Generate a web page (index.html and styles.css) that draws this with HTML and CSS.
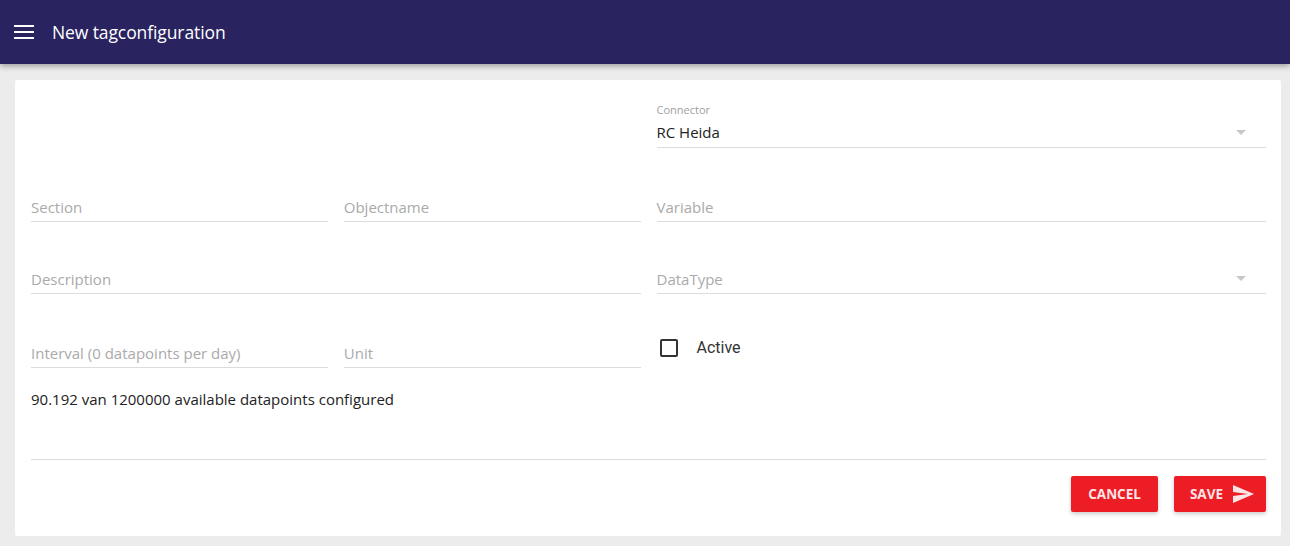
FILE: index.html
```html
<!DOCTYPE html>
<html lang="nl">
<head>
    <meta charset="UTF-8">
    <meta name="viewport" content="width=device-width, initial-scale=1.0">
    <title>New tagconfiguration</title>
    <link rel="stylesheet" href="styles.css">
</head>
<body>
    <header class="toolbar">
        <button class="menu-btn" aria-label="menu">
            <svg width="20" height="14" viewBox="0 0 20 14">
                <rect x="0" y="0" width="20" height="2" fill="#fff"/>
                <rect x="0" y="6" width="20" height="2" fill="#fff"/>
                <rect x="0" y="12" width="20" height="2" fill="#fff"/>
            </svg>
        </button>
        <h1>New tagconfiguration</h1>
    </header>

    <main class="page">
        <div class="card">
            <div class="form-grid">
                <div class="field span-2 empty-cell"></div>
                <div class="field select span-2">
                    <label>Connector</label>
                    <div class="input value">RC Heida<span class="caret"></span></div>
                </div>

                <div class="field">
                    <label></label>
                    <div class="input placeholder">Section</div>
                </div>
                <div class="field">
                    <label></label>
                    <div class="input placeholder">Objectname</div>
                </div>
                <div class="field span-2">
                    <label></label>
                    <div class="input placeholder">Variable</div>
                </div>

                <div class="field span-2 tight">
                    <label></label>
                    <div class="input placeholder">Description</div>
                </div>
                <div class="field select span-2 tight">
                    <label></label>
                    <div class="input placeholder">DataType<span class="caret"></span></div>
                </div>

                <div class="field">
                    <label></label>
                    <div class="input placeholder">Interval (0 datapoints per day)</div>
                </div>
                <div class="field">
                    <label></label>
                    <div class="input placeholder">Unit</div>
                </div>
                <div class="checkbox-cell span-2">
                    <span class="box"></span>
                    <span>Active</span>
                </div>
            </div>

            <p class="info">90.192 van 1200000 available datapoints configured</p>

            <div class="actions">
                <button class="btn">CANCEL</button>
                <button class="btn btn-icon">SAVE
                    <svg width="24" height="24" viewBox="0 0 24 24">
                        <path d="M2.01 21L23 12 2.01 3 2 10l15 2-15 2z" fill="#fde4e6"/>
                    </svg>
                </button>
            </div>
        </div>
    </main>
</body>
</html>
```

FILE: styles.css
```css
* {
    box-sizing: border-box;
}
body {
    margin: 0;
    font-family: "Open Sans", "Noto Sans", Arial, sans-serif;
    background: #ececec;
    color: #222;
    height: 546px;
    overflow: hidden;
}
.toolbar {
    height: 64px;
    background: #29235f;
    display: flex;
    align-items: center;
    padding: 0 14px;
    box-shadow: 0 2px 6px rgba(0,0,0,0.35);
    position: relative;
}
.menu-btn {
    background: none;
    border: none;
    padding: 0;
    margin-right: 18px;
    display: flex;
    cursor: pointer;
}
.toolbar h1 {
    margin: 0;
    color: #fff;
    font-size: 17.5px;
    font-weight: 400;
    letter-spacing: -0.1px;
}
.page {
    padding: 16px 9px 0 15px;
}
.card {
    background: #fff;
    border-radius: 2px;
    padding: 20px 15px 25px 16px;
    height: 456px;
}
.form-grid {
    display: grid;
    grid-template-columns: 1fr 1fr 1fr 1fr;
    column-gap: 16px;
    row-gap: 26px;
}
.span-2 {
    grid-column: span 2;
}
.tight {
    margin-top: -2px;
}
.field label {
    display: block;
    height: 16px;
    font-size: 11px;
    line-height: 16px;
    color: #9e9e9e;
    padding-top: 2px;
}
.input {
    position: relative;
    height: 32px;
    padding-top: 3px;
    line-height: 28px;
    font-size: 15px;
    border-bottom: 1px solid #dcdcdc;
    color: #222;
}
.input.value {
    padding-top: 2px;
}
.input.placeholder {
    color: #aaa;
}
.caret {
    position: absolute;
    right: 20px;
    top: 14px;
    width: 0;
    height: 0;
    border-left: 5px solid transparent;
    border-right: 5px solid transparent;
    border-top: 5px solid #c8c8c8;
}
.checkbox-cell {
    display: flex;
    align-items: center;
    align-self: start;
    padding: 18px 0 0 3px;
    font-family: Roboto, Arial, sans-serif;
    font-size: 16px;
    color: #333;
}
.checkbox-cell .box {
    width: 18px;
    height: 18px;
    border: 2px solid #333;
    border-radius: 2px;
    margin-right: 19px;
}
.info {
    margin: 21px 0 0;
    font-size: 15px;
    line-height: 20px;
    color: #222;
}
.actions {
    margin-top: 50px;
    border-top: 1px solid #dcdcdc;
    padding-top: 16px;
    display: flex;
    justify-content: flex-end;
    gap: 16px;
}
.btn {
    height: 36px;
    padding: 0 17px;
    background: #ec1d25;
    color: #fde4e6;
    border: none;
    border-radius: 2px;
    font-family: inherit;
    font-weight: 700;
    font-size: 13.5px;
    display: flex;
    align-items: center;
    gap: 8px;
    box-shadow: 0 2px 4px rgba(0,0,0,0.2);
    cursor: pointer;
}
.btn-icon {
    padding: 0 11px 0 16px;
}
```
